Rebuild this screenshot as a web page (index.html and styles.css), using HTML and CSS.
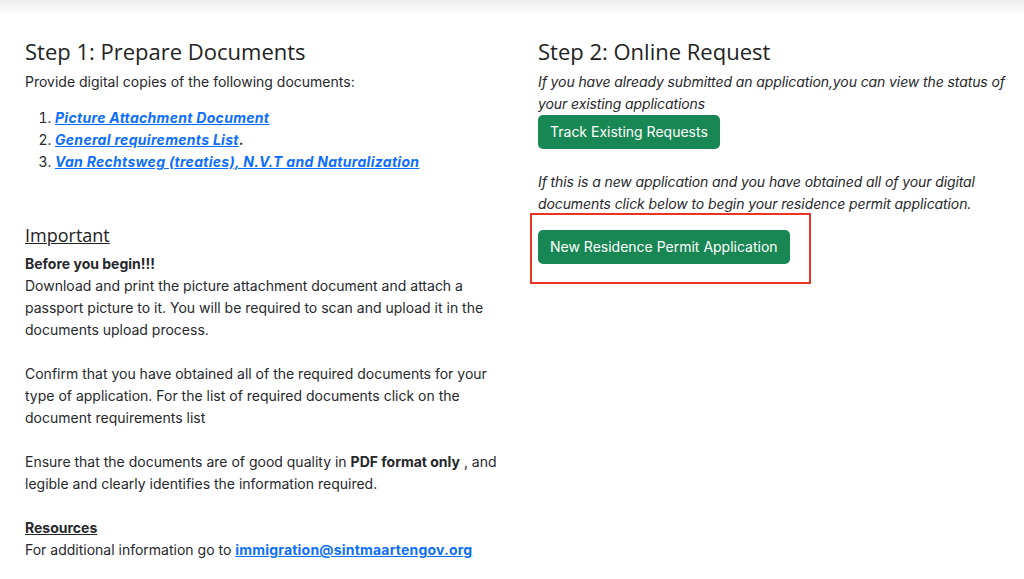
FILE: index.html
```html
<!DOCTYPE html>
<html lang="en">
<head>
    <meta charset="UTF-8">
    <meta name="viewport" content="width=device-width, initial-scale=1.0">
    <title>Residence Permit</title>
    <link rel="stylesheet" href="styles.css">
</head>
<body>
    <div class="topbar"></div>
    <div class="container">
        <div class="col">
            <h2 class="step-title">Step 1: Prepare Documents</h2>
            <p class="intro">Provide digital copies of the following documents:</p>
            <ol class="doc-list">
                <li><a href="#">Picture Attachment Document</a></li>
                <li><a href="#">General requirements List</a><b>.</b></li>
                <li><a href="#">Van Rechtsweg (treaties), N.V.T and Naturalization</a></li>
            </ol>

            <h3 class="important">Important</h3>
            <p>
                <b>Before you begin!!!</b><br>
                Download and print the picture attachment document and attach a passport picture to it. You will be required to scan and upload it in the documents upload process.
            </p>
            <p>Confirm that you have obtained all of the required documents for your type of application. For the list of required documents click on the document requirements list</p>
            <p>Ensure that the documents are of good quality in <b>PDF format only</b>&nbsp;, and legible and clearly identifies the information required.</p>
            <p>
                <b class="resources">Resources</b><br>
                For additional information go to <a class="mail" href="#">immigration@sintmaartengov.org</a>
            </p>
        </div>
        <div class="col">
            <h2 class="step-title">Step 2: Online Request</h2>
            <p class="note">If you have already submitted an application,you can view the status of your existing applications</p>
            <button class="btn">Track Existing Requests</button>
            <p class="note second">If this is a new application and you have obtained all of your digital documents click below to begin your residence permit application.</p>
            <div class="highlight">
                <button class="btn">New Residence Permit Application</button>
            </div>
        </div>
    </div>
</body>
</html>
```

FILE: styles.css
```css
body {
    margin: 0;
    padding: 0;
    font-family: Inter, "Liberation Sans", sans-serif;
    font-size: 14px;
    line-height: 22px;
    color: #26282b;
    background-color: #ffffff;
}
.topbar {
    height: 16px;
    background: linear-gradient(#ececec, #ffffff);
}
.container {
    display: grid;
    grid-template-columns: 486px 1fr;
    column-gap: 27px;
    padding-left: 25px;
    padding-top: 20px;
}
.step-title {
    font-family: "Open Sans", sans-serif;
    font-weight: 400;
    font-size: 22px;
    line-height: 30px;
    margin: 0 0 5px 0;
    color: #222;
}
p {
    margin: 0 0 22px 0;
}
.intro {
    margin-bottom: 14px;
}
.doc-list {
    margin: 0 0 49px 0;
    padding-left: 30px;
}
.doc-list a {
    color: #0d6efd;
    font-weight: bold;
    font-style: italic;
    letter-spacing: 0.3px;
}
.important {
    font-family: "Open Sans", sans-serif;
    font-weight: 400;
    font-size: 18px;
    line-height: 26px;
    text-decoration: underline;
    text-decoration-thickness: 1px;
    margin: 0 0 5px 0;
    color: #222;
}
.resources {
    text-decoration: underline;
}
.mail {
    color: #0d6efd;
    font-weight: bold;
    letter-spacing: 0.2px;
}
.note {
    font-style: italic;
    letter-spacing: -0.1px;
    margin: 0;
}
.note.second {
    margin-top: 22px;
}
.btn {
    background-color: #198754;
    color: #ffffff;
    border: none;
    border-radius: 5px;
    font-family: Inter, "Liberation Sans", sans-serif;
    font-size: 14px;
    line-height: 22px;
    padding: 6px 12px;
    cursor: pointer;
}
.highlight {
    box-sizing: border-box;
    border: 2px solid #ea3323;
    width: 281px;
    margin-top: -2px;
    margin-left: -8px;
    padding: 15px 0 18px 6px;
}
```
